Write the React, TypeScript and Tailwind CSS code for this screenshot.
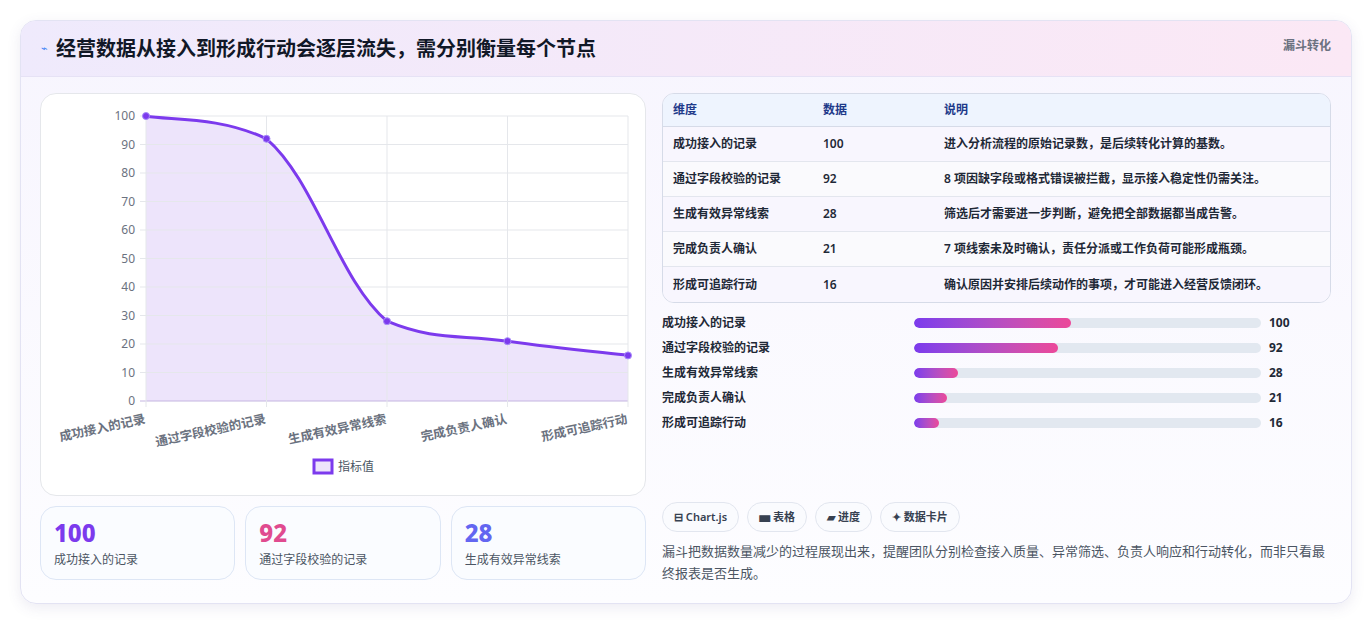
import React from 'react';

const labels = ['成功接入的记录', '通过字段校验的记录', '生成有效异常线索', '完成负责人确认', '形成可追踪行动'];
const values = [100, 92, 28, 21, 16];
const notes = [
  '进入分析流程的原始记录数，是后续转化计算的基数。',
  '8 项因缺字段或格式错误被拦截，显示接入稳定性仍需关注。',
  '筛选后才需要进一步判断，避免把全部数据都当成告警。',
  '7 项线索未及时确认，责任分派或工作负荷可能形成瓶颈。',
  '确认原因并安排后续动作的事项，才可能进入经营反馈闭环。',
];

const X0 = 105, X1 = 587, Y0 = 22, Y1 = 307;
const pts = values.map((v, i) => [X0 + ((X1 - X0) / 4) * i, Y1 - (v / 100) * (Y1 - Y0)]);

function smoothPath(p: number[][]) {
  let d = `M${p[0][0]},${p[0][1]}`;
  const clamp = (v: number, a: number, b: number) => Math.min(Math.max(v, Math.min(a, b)), Math.max(a, b));
  for (let i = 0; i < p.length - 1; i++) {
    const p0 = p[i - 1] || p[i], p1 = p[i], p2 = p[i + 1], p3 = p[i + 2] || p2;
    const t = 0.2;
    const c1 = [p1[0] + (p2[0] - p0[0]) * t, clamp(p1[1] + (p2[1] - p0[1]) * t, p1[1], p2[1])];
    const c2 = [p2[0] - (p3[0] - p1[0]) * t, clamp(p2[1] - (p3[1] - p1[1]) * t, p1[1], p2[1])];
    d += ` C${c1[0]},${c1[1]} ${c2[0]},${c2[1]} ${p2[0]},${p2[1]}`;
  }
  return d;
}

function Chart() {
  const line = smoothPath(pts);
  return (
    <svg width="606" height="401" className="block">
      <path d={`${line} L${X1},${Y1} L${X0},${Y1} Z`} fill="#ede4fb" />
      {[0, 10, 20, 30, 40, 50, 60, 70, 80, 90, 100].map((v) => {
        const y = Y1 - (v / 100) * (Y1 - Y0);
        return (
          <g key={v}>
            <line x1={X0 - 6} x2={X1} y1={y} y2={y} stroke={v === 0 ? '#c4b5e0' : '#e5e7eb'} />
            <text x={X0 - 11} y={y + 4} textAnchor="end" fontSize="12" fill="#6b7280">{v}</text>
          </g>
        );
      })}
      {pts.map(([x], i) => (
        <line key={i} x1={x} x2={x} y1={Y0} y2={Y1 + 6} stroke="#e5e7eb" />
      ))}
      <path d={line} fill="none" stroke="#7c3aed" strokeWidth="3" />
      {pts.map(([x, y], i) => (
        <circle key={i} cx={x} cy={y} r="3.5" fill="#7c3aed" stroke="#a78bfa" strokeWidth="1" />
      ))}
      {labels.map((l, i) => (
        <text key={l} x={pts[i][0]} y={Y1 + 22} textAnchor="end" fontSize="12.5" fontWeight="600" fill="#6b7280" transform={`rotate(-12 ${pts[i][0]} ${Y1 + 22})`}>{l}</text>
      ))}
      <rect x="273" y="366" width="18" height="13" fill="#ede4fb" stroke="#7c3aed" strokeWidth="3" />
      <text x="297" y="377" fontSize="12" fill="#4b5563">指标值</text>
    </svg>
  );
}

export default function App() {
  return (
    <div className="min-h-[620px] bg-white p-5" style={{ fontFamily: '"Noto Sans", "Noto Sans CJK SC", sans-serif' }}>
      <div className="rounded-2xl border border-[#e3e3f3] bg-gradient-to-b from-[#f7f5fe] to-[#fdfdff] overflow-hidden shadow-[0_4px_14px_rgba(80,70,140,0.1)]">
        <div className="h-[56px] flex items-center justify-between px-5 bg-gradient-to-r from-[#efeafc] to-[#fbe8f5] border-b border-[#e6e2f5]">
          <div className="flex items-center gap-2">
            <span className="text-[11px] text-[#3b82f6]">⌁</span>
            <h1 className="text-[20px] font-bold text-[#111827]">经营数据从接入到形成行动会逐层流失，需分别衡量每个节点</h1>
          </div>
          <span className="text-[12px] font-semibold text-[#6b7280] self-start mt-4">漏斗转化</span>
        </div>
        <div className="flex gap-4 pl-[19px] pr-5 pt-4 pb-[19px]">
          <div className="w-[606px] flex flex-col gap-[10px]">
            <div className="h-[403px] rounded-2xl border border-[#e5e7eb] bg-white overflow-hidden">
              <Chart />
            </div>
            <div className="grid grid-cols-3 gap-[10px]">
              {[['100', 'text-[#7c3aed]'], ['92', 'text-[#e04b8f]'], ['28', 'text-[#6366f1]']].map(([v, c], i) => (
                <div key={v} className="h-[74px] rounded-2xl border border-[#dde6f5] bg-[#fafcff] px-[13px] pt-3">
                  <div className={`text-[24px] font-extrabold leading-7 ${c}`}>{v}</div>
                  <div className="text-[12px] text-[#4b5563] mt-1">{labels[i]}</div>
                </div>
              ))}
            </div>
          </div>
          <div className="flex-1 flex flex-col">
            <div className="rounded-xl border border-[#d6dbe8] overflow-hidden text-[12px] text-[#1f2937]">
              <div className="flex h-[33px] items-center bg-[#eef4fe] font-bold text-[#1e3a8a] border-b border-[#d6dbe8]">
                <div className="w-[160px] pl-[10px]">维度</div>
                <div className="w-[121px]">数据</div>
                <div className="flex-1">说明</div>
              </div>
              {labels.map((l, i) => (
                <div key={l} className={`flex h-[35px] items-center font-semibold ${i % 2 === 0 ? 'bg-[#f8f6fe]' : 'bg-[#fafafd]'} ${i < 4 ? 'border-b border-[#e3e6ee]' : ''}`}>
                  <div className="w-[160px] pl-[10px]">{l}</div>
                  <div className="w-[121px]">{values[i]}</div>
                  <div className="flex-1">{notes[i]}</div>
                </div>
              ))}
            </div>
            <div className="flex flex-col gap-[7px] mt-[11px]">
              {labels.map((l, i) => (
                <div key={l} className="flex items-center h-[18px] text-[12px] font-semibold text-[#1f2937]">
                  <div className="w-[252px]">{l}</div>
                  <div className="w-[347px] h-[10px] rounded-full bg-[#e2e8f0] overflow-hidden">
                    <div className="h-full rounded-full bg-gradient-to-r from-[#7c3aed] to-[#ec4899]" style={{ width: `${values[i] * 0.452}%` }} />
                  </div>
                  <div className="ml-2 font-bold">{values[i]}</div>
                </div>
              ))}
            </div>
            <div className="flex gap-2 mt-[70px]">
              {['⊟ Chart.js', '▅ 表格', '▰ 进度', '✦ 数据卡片'].map((t) => (
                <span key={t} className="h-[30px] px-[11px] flex items-center rounded-full border border-[#e2e6ef] bg-[#fafbfe] text-[11px] font-semibold text-[#374151]">{t}</span>
              ))}
            </div>
            <p className="mt-[8px] text-[13px] leading-[22px] text-[#4b5563]">漏斗把数据数量减少的过程展现出来，提醒团队分别检查接入质量、异常筛选、负责人响应和行动转化，而非只看最终报表是否生成。</p>
          </div>
        </div>
      </div>
    </div>
  );
}
